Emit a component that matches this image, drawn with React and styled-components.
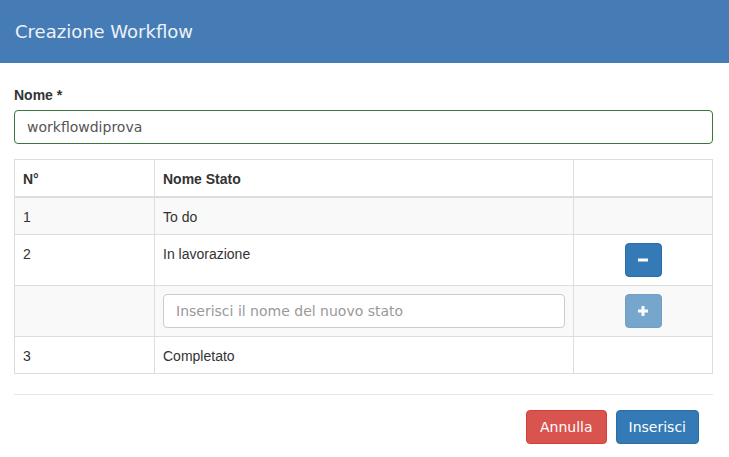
import styled, { createGlobalStyle } from "styled-components";

const GlobalStyle = createGlobalStyle`
  html, body {
    margin: 0;
    padding: 0;
    background: #fff;
  }
  body {
    font-family: "Liberation Sans", Arial, sans-serif;
    font-size: 14px;
    color: #333;
  }
  * {
    box-sizing: border-box;
  }
`;

const Dialog = styled.div`
  width: 729px;
  height: 457px;
  background: #fff;
  overflow: hidden;
`;

const Header = styled.div`
  height: 63px;
  background: #457cb6;
  display: flex;
  align-items: center;
  padding: 0 15px;
`;

const Title = styled.h4`
  margin: 0;
  font-family: "DejaVu Sans", sans-serif;
  font-weight: normal;
  font-size: 18px;
  color: #edf2f8;
`;

const Body = styled.div`
  padding: 22px 16px 0 14px;
`;

const Label = styled.label`
  display: block;
  font-weight: bold;
  font-size: 14px;
  line-height: 20px;
  margin-bottom: 5px;
`;

const TextInput = styled.input`
  display: block;
  width: 100%;
  height: 34px;
  padding: 6px 12px;
  font-family: "DejaVu Sans", sans-serif;
  font-size: 14px;
  color: #555;
  background: #fff;
  border: 1px solid ${({ $valid }) => ($valid ? "#3c763d" : "#ccc")};
  border-radius: 4px;
  outline: none;
  &::placeholder {
    color: #999;
  }
`;

const Table = styled.table`
  width: 100%;
  margin-top: 15px;
  border-collapse: collapse;
  border: 1px solid #ddd;
  table-layout: fixed;
`;

const Th = styled.th`
  text-align: left;
  font-weight: bold;
  padding: 9px 8px 7px;
  line-height: 20px;
  border: 1px solid #ddd;
  border-bottom: 2px solid #ddd;
  width: ${({ $w }) => $w || "auto"};
`;

const Row = styled.tr`
  background: ${({ $striped }) => ($striped ? "#f9f9f9" : "#fff")};
`;

const Td = styled.td`
  padding: 8px;
  line-height: 20px;
  vertical-align: top;
  border: 1px solid #ddd;
  text-align: ${({ $center }) => ($center ? "center" : "left")};
`;

const CellText = styled.span`
  display: block;
  padding-top: 1px;
  margin-bottom: -1px;
`;

const IconButton = styled.button`
  display: inline-flex;
  align-items: center;
  justify-content: center;
  width: 37px;
  height: 34px;
  padding: 0;
  border: 1px solid #2e6da4;
  border-radius: 4px;
  background: #337ab7;
  opacity: ${({ disabled }) => (disabled ? 0.65 : 1)};
  vertical-align: top;
`;

const Divider = styled.hr`
  margin: 20px 0 15px;
  border: 0;
  border-top: 1px solid #e5e5e5;
`;

const Footer = styled.div`
  display: flex;
  justify-content: flex-end;
  gap: 9px;
  padding-right: 14px;
`;

const Button = styled.button`
  height: 34px;
  padding: 6px ${({ $variant }) => ($variant === "danger" ? "13px" : "12px")};
  font-family: "DejaVu Sans", sans-serif;
  font-size: 14px;
  color: #fff;
  border-radius: 4px;
  border: 1px solid ${({ $variant }) => ($variant === "danger" ? "#d43f3a" : "#2e6da4")};
  background: ${({ $variant }) => ($variant === "danger" ? "#d9534f" : "#337ab7")};
`;

function MinusIcon() {
  return (
    <svg width="12" height="12" viewBox="0 0 12 12">
      <rect x="1" y="4.5" width="10" height="3" fill="#fff" />
    </svg>
  );
}

function PlusIcon() {
  return (
    <svg width="12" height="12" viewBox="0 0 12 12">
      <rect x="1" y="4.5" width="10" height="3" fill="#fff" />
      <rect x="4.5" y="1" width="3" height="10" fill="#fff" />
    </svg>
  );
}

export default function App() {
  return (
    <>
      <GlobalStyle />
      <Dialog>
        <Header>
          <Title>Creazione Workflow</Title>
        </Header>
        <Body>
          <Label>Nome *</Label>
          <TextInput $valid defaultValue="workflowdiprova" />
          <Table>
            <thead>
              <tr>
                <Th $w="140px">N°</Th>
                <Th $w="419px">Nome Stato</Th>
                <Th></Th>
              </tr>
            </thead>
            <tbody>
              <Row $striped>
                <Td><CellText>1</CellText></Td>
                <Td><CellText>To do</CellText></Td>
                <Td></Td>
              </Row>
              <Row>
                <Td><CellText>2</CellText></Td>
                <Td><CellText>In lavorazione</CellText></Td>
                <Td $center>
                  <IconButton type="button">
                    <MinusIcon />
                  </IconButton>
                </Td>
              </Row>
              <Row $striped>
                <Td></Td>
                <Td>
                  <TextInput placeholder="Inserisci il nome del nuovo stato" />
                </Td>
                <Td $center>
                  <IconButton type="button" disabled>
                    <PlusIcon />
                  </IconButton>
                </Td>
              </Row>
              <Row>
                <Td><CellText>3</CellText></Td>
                <Td><CellText>Completato</CellText></Td>
                <Td></Td>
              </Row>
            </tbody>
          </Table>
          <Divider />
          <Footer>
            <Button type="button" $variant="danger">Annulla</Button>
            <Button type="button">Inserisci</Button>
          </Footer>
        </Body>
      </Dialog>
    </>
  );
}
